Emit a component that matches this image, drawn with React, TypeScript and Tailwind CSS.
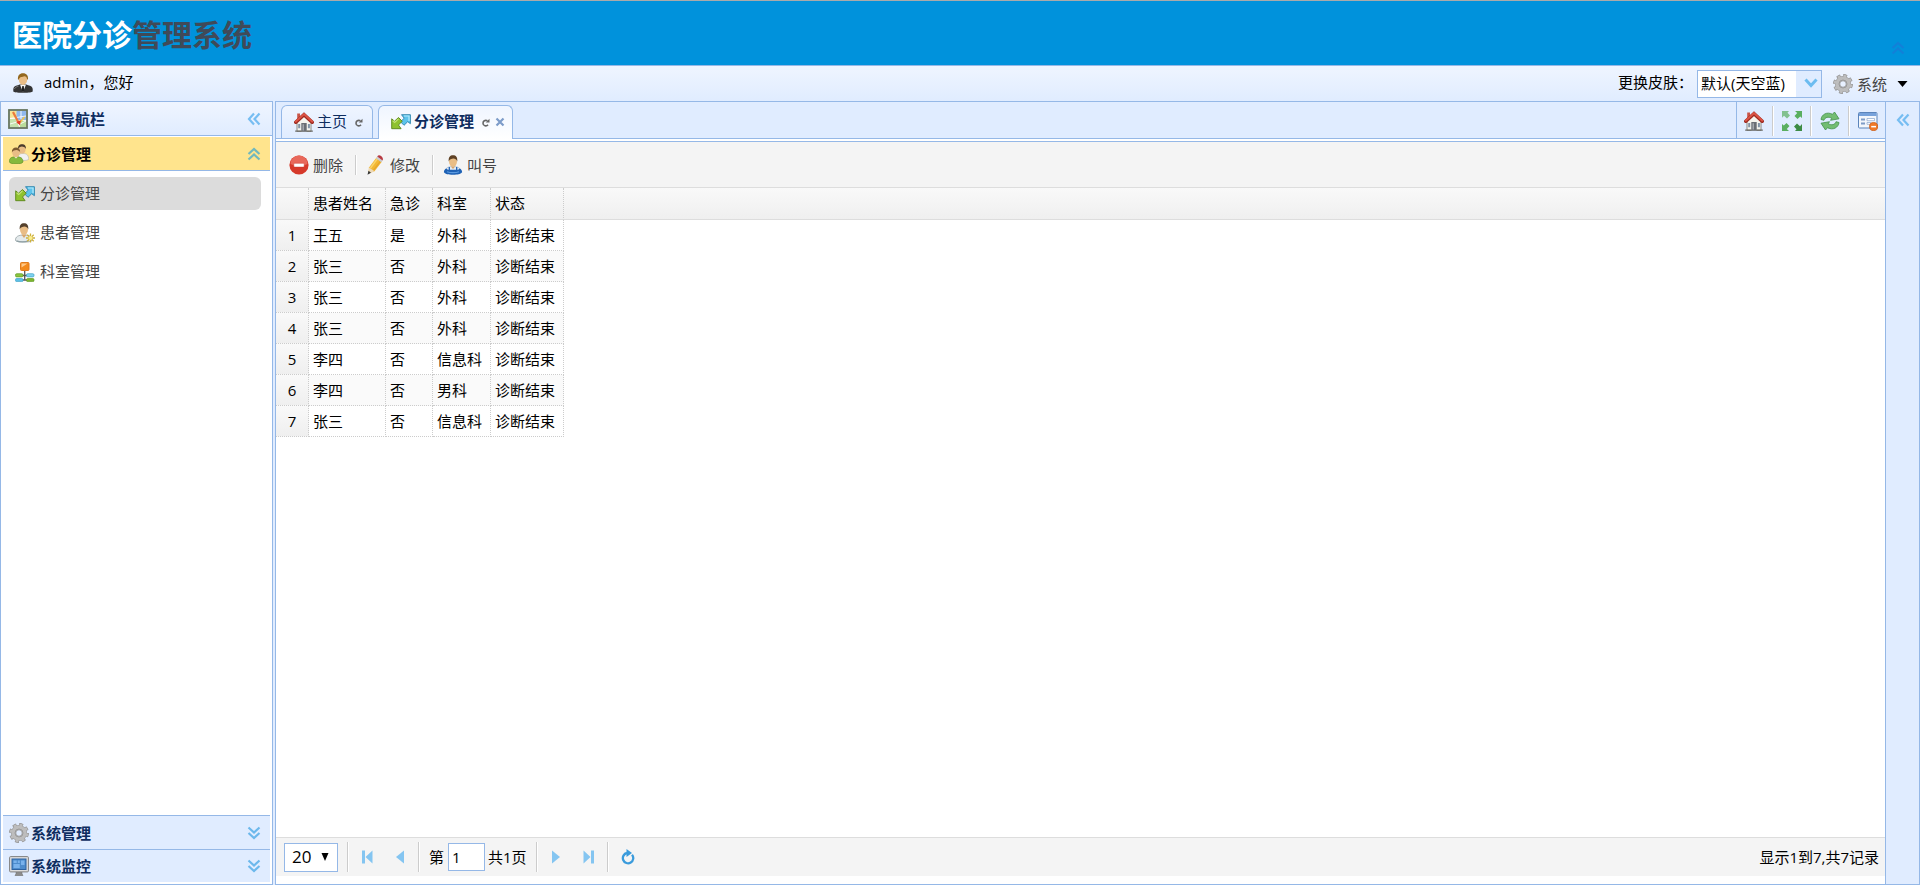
import React from 'react';

type IconProps = { className?: string };

const UserSuitIcon = ({ className = 'w-5 h-5' }: IconProps) => (
    <svg viewBox="0 0 20 20" className={className} aria-hidden="true">
        <path d="M0.300 18.500V16c0-2.200 1.800-3 4.500-3.800L8 11h4l3.200 1.200c2.700.8 4.500 1.600 4.500 3.800v2.500c-1 .9-3 1.200-9.700 1.200S1.300 19.400.3 18.500z" fill="#343434" />
        <path d="M1.500 16c.2-1.500 2-2.200 4-2.800" stroke="#777" fill="none" />
        <path d="M7 11.500h6l-1.500 4L10 19l-1.500-3.500z" fill="#f4f4f4" />
        <path d="M9.300 13h1.400l.7 4.500L10 19l-1.400-1.500z" fill="#222" />
        <ellipse cx="10" cy="6.500" rx="4.200" ry="5.400" fill="#e9bd86" />
        <path d="M5 7C4.500 2.500 6.500.3 10 .3S15.500 2.500 15 7l-1-1.200c-.3-1.600-1-2.300-2.500-2.600C9 4.200 7 3.600 6 6z" fill="#93671f" />
    </svg>
);

const MapIcon = () => (
    <svg viewBox="0 0 20 20" className="w-5 h-5" aria-hidden="true">
        <rect x="1" y="1" width="18" height="18" fill="#f5f3e6" stroke="#66755f" strokeWidth="1.800" />
        <rect x="2" y="2" width="7" height="7" fill="#f6e596" />
        <rect x="8.500" y="2" width="9.500" height="9" fill="#8fb8ee" />
        <path d="M2 10h6l3 8H2z" fill="#c5e3ae" />
        <path d="M12 12h6v6h-6z" fill="#b9dc9a" />
        <path d="M2 9.500l16-2.500M13 2v8M2 15l7-2M10 16l8-4" stroke="#fff" strokeWidth="0.900" fill="none" />
        <path d="M5 3l6 11.500" stroke="#ec7a3c" strokeWidth="2.200" fill="none" />
        <path d="M11 14.500l5.500-6.500" stroke="#f3c34d" strokeWidth="1.600" fill="none" />
        <path d="M8.200 13l3.800 3.300.8-5z" fill="#df3a28" />
    </svg>
);

const GroupIcon = () => (
    <svg viewBox="0 0 20 20" className="w-5 h-5" aria-hidden="true">
        <path d="M9 12c1-2 2.500-2.500 5-2.500 4 0 5.700 2 5.700 6-3 1.500-7 1-9 .5z" fill="#f1f1f1" stroke="#aaa" strokeWidth="0.500" />
        <ellipse cx="13" cy="5" rx="3.600" ry="4.500" fill="#e9bd86" />
        <path d="M9 5C9 1.500 10.500.2 13 .2S17 1.500 17 5c-1-2-3-2-4-2.400C11 3 10 3.500 9 5z" fill="#4b3b2b" />
        <path d="M.4 18c-.3-4 2-5.200 6.600-5.200s7 1.200 7 5.200c-1 1.500-3 1.700-7 1.700S1.200 19.500.4 18z" fill="#86b93d" stroke="#5d8c23" strokeWidth="0.600" />
        <path d="M5 12.500h4l-2 2z" fill="#f5e6cf" />
        <ellipse cx="7" cy="8.500" rx="3.800" ry="4.500" fill="#e9bd86" />
        <path d="M2.800 8.500C2.800 5 4.500 3.500 7 3.500s4.200 1.500 4.200 5C10.500 6.500 9 6.500 7.500 6 5.500 6.200 4 6.500 2.800 8.500z" fill="#7c5a30" />
    </svg>
);

const TransferIcon = () => (
    <svg viewBox="0 0 20 20" className="w-5 h-5" aria-hidden="true">
        <path d="M10.500 2.700h8.900v9l-2.700-2-3.700 3.600-3.500-3.500 3.700-3.600z" fill="#5cc3ec" stroke="#2b83ad" strokeWidth="0.900" strokeLinejoin="round" />
        <path d="M13 4h5v5" stroke="#b3e9fb" strokeWidth="1.200" fill="none" />
        <path d="M.7 6.800l2.800 2.400L7.500 5.500l3.700 3.700-3.700 3.800 2.600 3.700H.7z" fill="#8fc22f" stroke="#5a861a" strokeWidth="0.900" strokeLinejoin="round" />
        <path d="M1.700 8.800l2 1.700 3.800-3.600" stroke="#c3e377" strokeWidth="1.200" fill="none" />
    </svg>
);

const UserStarIcon = () => (
    <svg viewBox="0 0 20 20" className="w-5 h-5" aria-hidden="true">
        <path d="M.5 17.500c-.3-4 3-5.500 8.500-5.500s8 1.500 8 5.500c-2 1.500-4 1.500-8 1.500S2 19 .5 17.500z" fill="#e4eaec" stroke="#8d999c" strokeWidth="0.700" />
        <path d="M1.500 17.800c3 1.300 9 1.300 12 0" stroke="#8fa0a5" strokeWidth="1.300" fill="none" />
        <path d="M6.500 11.500h5L9 15z" fill="#d9a56a" />
        <ellipse cx="9" cy="6.500" rx="4" ry="5.200" fill="#e9bd86" />
        <path d="M4.700 6.500C4.400 2 6 .3 9 .3s4.600 1.700 4.300 6.200C12.500 4 11 4 9.500 3.500 7.500 4 5.500 4 4.700 6.500z" fill="#54402c" />
        <path d="M15.500 10.500v9M11 15h9M12.300 11.800l6.400 6.400M18.700 11.800l-6.400 6.400" stroke="#cfb13d" strokeWidth="1.300" />
        <circle cx="15.500" cy="15" r="2" fill="#fbef8e" />
    </svg>
);

const OrgIcon = () => (
    <svg viewBox="0 0 20 20" className="w-5 h-5" aria-hidden="true">
        <path d="M9.700 8v10.500M6 13.500h8M6 18h8" stroke="#555" strokeWidth="1.300" />
        <rect x="5.500" y="0.500" width="8.500" height="8" rx="1" fill="#f38a1c" stroke="#e07b1c" />
        <path d="M6.500 1.500h6l-6 4z" fill="#ffc98a" />
        <rect x="0.500" y="11.700" width="7.500" height="3.200" rx="1.200" fill="#8cc63f" stroke="#5f9a25" strokeWidth="0.700" />
        <rect x="11.500" y="11.700" width="7.500" height="3.200" rx="1.200" fill="#7fd2ee" stroke="#3fa3c8" strokeWidth="0.700" />
        <rect x="0.500" y="16.500" width="7.500" height="3.100" rx="1.200" fill="#5cbfe6" stroke="#3fa3c8" strokeWidth="0.700" />
        <rect x="11.500" y="16.500" width="7.500" height="3.100" rx="1.200" fill="#7db52f" stroke="#5f9a25" strokeWidth="0.700" />
    </svg>
);

const GearIcon = () => (
    <svg viewBox="0 0 20 20" className="w-5 h-5" aria-hidden="true">
        <circle cx="10" cy="10" r="8.300" fill="none" stroke="#909090" strokeWidth="3.200" strokeDasharray="3.700 2.818" />
        <circle cx="10" cy="10" r="5.400" fill="none" stroke="#9b9b9b" strokeWidth="5.400" />
        <circle cx="10" cy="10" r="8" fill="none" stroke="#bdbdbd" strokeWidth="2.600" strokeDasharray="2.700 3.583" strokeDashoffset="-0.500" />
        <circle cx="10" cy="10" r="5.400" fill="none" stroke="#bdbdbd" strokeWidth="4.400" />
        <circle cx="10" cy="10" r="4" fill="none" stroke="#969696" strokeWidth="0.900" />
    </svg>
);

const MonitorIcon = () => (
    <svg viewBox="0 0 20 20" className="w-5 h-5" aria-hidden="true">
        <path d="M7 15h6v2.500l1 2.200H6l1-2.200z" fill="#8c8c8c" stroke="#6c6c6c" strokeWidth="0.500" />
        <rect x="0.600" y="0.600" width="18.800" height="15.300" rx="1" fill="#dedede" stroke="#7f7f7f" />
        <rect x="3" y="3" width="14" height="10.500" fill="#4d8ccc" stroke="#2d62a2" />
        <path d="M4.500 4.500h3.200V7H4.500zM8.800 4.500h2v2.500h-2zM12 4.500h3.500V9H12zM4.500 8h6.300v4H4.500z" fill="#79b2ec" />
    </svg>
);

const HomeIcon = () => (
    <svg viewBox="0 0 20 20" className="w-5 h-5" aria-hidden="true">
        <path d="M3 10l7-7 7 7v9.300H3z" fill="#f6f4ee" stroke="#7f7f79" strokeWidth="0.900" />
        <path d="M3.200 1.500h2.800v4.500L3.200 8.500z" fill="#c95548" />
        <path d="M1.800 10.200L10 2.600l8.200 7.600" fill="none" stroke="#9f2a20" strokeWidth="3.600" strokeLinecap="round" />
        <path d="M1.900 9.600L10 2.100l8.100 7.500" fill="none" stroke="#dc5446" strokeWidth="2" strokeLinecap="round" />
        <rect x="7.300" y="11" width="5.400" height="8.500" fill="#6b6e74" />
        <path d="M8.500 12.300h1.500v6.200H8.500z" fill="#a5a8ad" />
        <path d="M4.200 12h2v4.300h-2zM13.900 12h2v4.300h-2z" fill="#8293a6" />
        <path d="M1.200 18.400h6.300v1.400H1.200zM12.500 18.400h6.300v1.400h-6.300z" fill="#6a6a64" />
    </svg>
);

const ArrowsOutIcon = () => (
    <svg viewBox="0 0 20 20" className="w-5 h-5 text-[#5aaf60]" fill="currentColor" aria-hidden="true">
        <path d="M0 0h7L5.500 1.800 8 4.500 5 7.500 2 4.800 0 6.800z" opacity="0.700" />
        <path d="M20 0v7l-1.800-1.500L15.500 8l-3-3 2.700-3L13 0z" />
        <path d="M0 20v-7l1.800 1.500L4.500 12l3 3-2.700 3L7 20z" />
        <path d="M20 20h-7l1.500-1.800L12 15.500l3-3 3 2.700 2-2.200z" fill="#3d8c45" />
    </svg>
);

const SyncIcon = () => (
    <svg viewBox="0 0 20 20" className="w-5 h-5" fill="#73bd72" stroke="#43904a" strokeWidth="0.800" strokeLinejoin="round" aria-hidden="true">
        <path d="M1 8.500C1.500 3.500 7 .3 12.500 3.300L14.500 1l4.500 6.800-8.500 1.500 1.300-2C8.500 5.500 5 6 4 9.300z" />
        <path d="M19 11.500c-.5 5-6 8.200-11.500 5.200L5.500 19 1 12.200l8.500-1.500-1.300 2c3.300 1.800 6.800 1.300 7.800-2z" />
    </svg>
);

const FormDeleteIcon = () => (
    <svg viewBox="0 0 20 20" className="w-5 h-5" aria-hidden="true">
        <rect x="0.500" y="1.500" width="18.500" height="15.500" rx="1" fill="#f3f7fc" stroke="#5b84bb" />
        <path d="M1 2h17.500v3H1z" fill="#77a2db" />
        <path d="M3 7.500h4v2H3zM3 11.500h4v2H3z" fill="#7f9cc6" />
        <path d="M9 7.500h7.500v2.200H9zM9 11.500h4v1.800H9z" fill="#fff" stroke="#8aa5cb" strokeWidth="0.700" />
        <circle cx="15.600" cy="15.600" r="4.100" fill="#f07a28" stroke="#c6550e" strokeWidth="0.700" />
        <path d="M13.200 14.900h4.800v1.500h-4.800z" fill="#fff" />
    </svg>
);

const DeleteIcon = () => (
    <svg viewBox="0 0 20 20" className="w-5 h-5" aria-hidden="true">
        <circle cx="10" cy="10" r="9.600" fill="#d6392a" />
        <path d="M1.500 9a8.500 8.500 0 0 1 17 0c-5 2.500-12 2.500-17 0z" fill="#e8685a" />
        <rect x="4.800" y="8.300" width="10.400" height="3.800" rx="0.800" fill="#fff" stroke="#c9362a" strokeWidth="0.500" />
    </svg>
);

const PencilIcon = () => (
    <svg viewBox="0 0 20 20" className="w-5 h-5" aria-hidden="true">
        <path d="M3 12.500L10.500 2.500l5.500 4L8.500 16.200 2.500 18.500z" fill="#f2b733" />
        <path d="M4.500 13l7-9.500" stroke="#fad368" strokeWidth="1.500" />
        <path d="M7.500 15.300l7.200-9.500" stroke="#e5a52d" strokeWidth="1.300" />
        <path d="M3 12.500l5.500 3.800-6.300 2.700z" fill="#ecd9b8" />
        <path d="M2.500 15.800l2.500 2-3.500 1.900z" fill="#333" />
        <path d="M10 3.200l1.200-1.600 5.300 4-1.200 1.700z" fill="#c9ccd2" />
        <path d="M11.200 1.600c1-1.400 2.200-1.700 3.900-.5s2.300 3 1.400 4.500z" fill="#b73a42" />
    </svg>
);

const CallUserIcon = () => (
    <svg viewBox="0 0 20 20" className="w-5 h-5" aria-hidden="true">
        <path d="M2.500 14.500c1-2.200 4-3 7.500-3s6.500.8 7.500 3l-1 3h-13z" fill="#e4edf7" stroke="#93aac6" strokeWidth="0.600" />
        <path d="M.9 17.300c-.1-1.800.9-3.300 2.600-3.800.8 1.300 1.800 1.500 2.800 1.200h7.400c1 .3 2 .1 2.800-1.200 1.700.5 2.700 2 2.600 3.800-2 2-4 2.400-9.100 2.400s-7.100-.4-9.100-2.400z" fill="#1f62b5" />
        <path d="M6.300 12v3M13.700 12v3" stroke="#1f62b5" strokeWidth="1.300" />
        <path d="M4 16.800c3 1.200 9 1.200 12 0" stroke="#5c9be0" strokeWidth="1.200" fill="none" />
        <path d="M7.700 11.500h4.600L10 14z" fill="#d9a56a" />
        <ellipse cx="10" cy="6.500" rx="4" ry="5.200" fill="#e9bd86" />
        <path d="M5.700 6.500C5.400 2 7 .3 10 .3s4.600 1.700 4.300 6.200C13.500 4 12 4 10.500 3.500 8.500 4 6.500 4 5.700 6.500z" fill="#5e4023" />
    </svg>
);

const ChevronsIcon = ({ className = '' }: IconProps) => (
    <svg viewBox="0 0 14 14" className={`w-3.5 h-3.5 ${className}`} fill="none" stroke="currentColor" strokeWidth="2.200" aria-hidden="true">
        <path d="M7 1.500L2 7l5 5.500M12.500 1.500l-5 5.500 5 5.500" />
    </svg>
);

const TabReloadIcon = () => (
    <svg viewBox="0 0 8 9" className="w-2 h-[9px]" aria-hidden="true">
        <path d="M5.500 2.700C3 1.800 1 3 1 5.200 1 8 4.500 8.700 6 6.700" fill="none" stroke="currentColor" strokeWidth="1.600" />
        <path d="M3.800 4.400h3.700V0.700z" fill="currentColor" />
    </svg>
);

const ReloadIcon = () => (
    <svg viewBox="0 0 14 16" className="w-3.5 h-4" aria-hidden="true">
        <path d="M11 5.700A5.200 5.200 0 1 1 6 4" fill="none" stroke="currentColor" strokeWidth="2.300" />
        <path d="M5.500 0l5.500 4-5.500 4z" fill="currentColor" />
    </svg>
);

const PagerArrow = ({ bar = false, flip = false }: { bar?: boolean; flip?: boolean }) => (
    <svg viewBox="0 0 12 14" className={`w-3 h-3.5 text-[#84c5f1] ${flip ? '-scale-x-100' : ''}`} fill="currentColor" aria-hidden="true">
        <path d={bar ? 'M1 .5h3v13H1zM11.500 .5v13L4.500 7z' : 'M10 .5v13L2 7z'} />
    </svg>
);

const Separator = ({ className = 'h-5' }: IconProps) => (
    <span className={`w-0.5 shrink-0 border-l border-l-[#ccc] border-r border-r-white ${className}`} />
);

const rows = [
    { name: '王五', urgent: '是', dept: '外科', status: '诊断结束' },
    { name: '张三', urgent: '否', dept: '外科', status: '诊断结束' },
    { name: '张三', urgent: '否', dept: '外科', status: '诊断结束' },
    { name: '张三', urgent: '否', dept: '外科', status: '诊断结束' },
    { name: '李四', urgent: '否', dept: '信息科', status: '诊断结束' },
    { name: '李四', urgent: '否', dept: '男科', status: '诊断结束' },
    { name: '张三', urgent: '否', dept: '信息科', status: '诊断结束' },
];

const menu = [
    { label: '分诊管理', icon: <TransferIcon />, active: true },
    { label: '患者管理', icon: <UserStarIcon />, active: false },
    { label: '科室管理', icon: <OrgIcon />, active: false },
];

const tabTools = [
    { label: '主页', icon: <HomeIcon /> },
    { label: '全屏', icon: <ArrowsOutIcon /> },
    { label: '刷新', icon: <SyncIcon /> },
    { label: '关闭', icon: <FormDeleteIcon /> },
];

const actions = [
    { label: '删除', icon: <DeleteIcon /> },
    { label: '修改', icon: <PencilIcon /> },
    { label: '叫号', icon: <CallUserIcon /> },
];

const Header = () => (
    <header className="shrink-0">
        <div className="h-[66px] flex items-center justify-between pl-3 pr-[15px] bg-[#0092dc] border-t border-t-[#aaa] border-b border-b-[#95b8e7]">
            <h1 className="text-[30px] leading-10 font-bold text-white pt-1">
                医院分诊<span className="text-[#404a58]">管理系统</span>
            </h1>
            <button type="button" aria-label="收起" className="self-end mb-2.5 text-[#1280d8]">
                <ChevronsIcon className="rotate-90" />
            </button>
        </div>
        <div className="h-[35px] flex items-center justify-between px-3 bg-linear-to-b from-[#eff5ff] to-[#e0ecff]">
            <div className="flex items-center gap-2.5 pb-0.5">
                <UserSuitIcon className="w-[22px] h-5" />
                <span className="pb-0.5">admin，您好</span>
            </div>
            <div className="flex items-center">
                <label htmlFor="skin" className="pb-1 mr-1">更换皮肤：</label>
                <div className="relative w-[125px] h-7">
                    <select id="skin" className="appearance-none w-full h-full pl-[3px] pb-0.5 bg-linear-to-r from-white from-80% to-[#e0ecff] to-80% border border-[#95b8e7] outline-none">
                        <option>默认(天空蓝)</option>
                    </select>
                    <svg viewBox="0 0 14 10" className="absolute right-1 top-2 w-3.5 h-2.5 pointer-events-none" fill="none" stroke="#6cbcf0" strokeWidth="3" aria-hidden="true">
                        <path d="M1.500 1.500L7 7.500l5.500-6" />
                    </svg>
                </div>
                <button type="button" className="flex items-center ml-[11px] text-[#444]">
                    <GearIcon />
                    <span className="ml-1">系统</span>
                    <svg viewBox="0 0 11 6" className="w-[11px] h-1.5 ml-2.5" aria-hidden="true">
                        <path d="M0.500 0h10L5.500 6z" fill="#000" />
                    </svg>
                </button>
            </div>
        </div>
    </header>
);

const AccordionHeader = ({ icon, label, last = false }: { icon: React.ReactNode; label: string; last?: boolean }) => (
    <button type="button" className={`flex items-center w-full pl-1.5 pr-[9px] bg-[#e0ecff] border-t border-[#95b8e7] font-bold text-[#0e2d5f] ${last ? 'h-[33px]' : 'h-[34px]'}`}>
        {icon}
        <span className="ml-0.5">{label}</span>
        <ChevronsIcon className="ml-auto -rotate-90 text-[#6cb8ec]" />
    </button>
);

const Sidebar = () => (
    <aside className="w-[273px] shrink-0 flex flex-col bg-white border border-[#95b8e7]">
        <div className="h-[34px] shrink-0 flex items-center pl-[7px] pr-[11px] border-b border-[#95b8e7] bg-linear-to-b from-[#eff5ff] to-[#e0ecff]">
            <MapIcon />
            <h2 className="ml-0.5 font-bold text-[#0e2d5f]">菜单导航栏</h2>
            <button type="button" aria-label="折叠菜单" className="ml-auto text-[#76bdf2]">
                <ChevronsIcon />
            </button>
        </div>
        <div className="flex-1 flex flex-col px-0.5 pt-px pb-0.5">
            <button type="button" className="h-[34px] flex items-center pl-1.5 pr-[9px] bg-[#ffe48d] border-b border-[#95b8e7] font-bold text-black">
                <GroupIcon />
                <span className="ml-0.5">分诊管理</span>
                <ChevronsIcon className="ml-auto rotate-90 text-[#72b8bd]" />
            </button>
            <nav className="flex-1 flex flex-col gap-1.5 pt-1.5 pl-1.5 pr-[9px]">
                {menu.map((item) => (
                    <a
                        key={item.label}
                        href="#"
                        className={`h-[33px] flex items-center gap-[5px] pl-1.5 rounded-md text-[#444] ${item.active ? 'bg-[#dcdcdc]' : ''}`}
                    >
                        {item.icon}
                        <span className="pb-0.5">{item.label}</span>
                    </a>
                ))}
            </nav>
            <AccordionHeader icon={<GearIcon />} label="系统管理" />
            <AccordionHeader icon={<MonitorIcon />} label="系统监控" last />
        </div>
    </aside>
);

const Tabs = () => (
    <div className="h-[37px] shrink-0 flex justify-between bg-[#e0ecff] border-b border-[#95b8e7]">
        <div role="tablist" className="flex gap-[5px] pl-[5px] pt-[3px] text-[#0e2d5f]">
            <div role="tab" aria-selected="false" className="h-[33px] w-[92px] flex items-center pl-3 border border-b-0 border-[#95b8e7] rounded-t-md bg-linear-to-b from-[#eff5ff] to-[#e0ecff]">
                <HomeIcon />
                <span className="ml-[3px] pb-0.5">主页</span>
                <button type="button" aria-label="刷新主页" className="ml-2 text-[#666]">
                    <TabReloadIcon />
                </button>
            </div>
            <div role="tab" aria-selected="true" className="h-[34px] w-[135px] flex items-center pl-3 pb-px border border-b-0 border-[#95b8e7] rounded-t-md bg-linear-to-b from-[#eff5ff] to-white font-bold">
                <TransferIcon />
                <span className="ml-[3px] pb-0.5">分诊管理</span>
                <button type="button" aria-label="刷新分诊管理" className="ml-2 text-[#666]">
                    <TabReloadIcon />
                </button>
                <button type="button" aria-label="关闭分诊管理" className="ml-[5px]">
                    <svg viewBox="0 0 10 10" className="w-2.5 h-2.5" stroke="#7d9cc9" strokeWidth="2.200" aria-hidden="true">
                        <path d="M1.500 1.500l7 7M8.500 1.500l-7 7" />
                    </svg>
                </button>
            </div>
        </div>
        <div className="flex items-center border-l border-[#95b8e7] px-[7px] pt-px">
            {tabTools.map((tool, i) => (
                <React.Fragment key={tool.label}>
                    {i > 0 && <Separator className="h-[30px] mx-2" />}
                    <button type="button" aria-label={tool.label}>{tool.icon}</button>
                </React.Fragment>
            ))}
        </div>
    </div>
);

const DataGrid = () => {
    const cell = 'border-r border-b border-dotted border-[#ccc] px-1 h-[31px] py-0';
    const head = 'border-r border-r-[#ccc] [border-right-style:dotted] border-b border-b-[#ddd] px-1 h-8 pt-0 pb-0.5 font-normal text-left';
    return (
        <table className="w-full table-fixed border-separate border-spacing-0 text-black">
            <colgroup>
                <col className="w-[33px]" />
                <col className="w-[77px]" />
                <col className="w-[47px]" />
                <col className="w-[58px]" />
                <col className="w-[73px]" />
                <col />
            </colgroup>
            <thead>
                <tr className="bg-linear-to-b from-[#f9f9f9] to-[#efefef]">
                    <th className={head} />
                    <th className={head}>患者姓名</th>
                    <th className={head}>急诊</th>
                    <th className={head}>科室</th>
                    <th className={head}>状态</th>
                    <th className="border-b border-[#ddd]" />
                </tr>
            </thead>
            <tbody>
                {rows.map((row, i) => (
                    <tr key={i}>
                        <td className={`${cell} text-center bg-linear-to-b from-[#f9f9f9] to-[#efefef]`}>{i + 1}</td>
                        {[row.name, row.urgent, row.dept, row.status].map((text, j) => (
                            <td key={j} className={`${cell} ${i % 2 ? 'bg-[#fafafa]' : 'bg-white'}`}>{text}</td>
                        ))}
                    </tr>
                ))}
            </tbody>
        </table>
    );
};

const Pager = () => (
    <div className="h-[39px] shrink-0 flex items-center pl-2 pr-1.5 mb-2 bg-[#f4f4f4] border-t border-[#ddd] text-black">
        <div className="relative w-[54px] h-[29px]">
            <select aria-label="每页条数" className="appearance-none w-full h-full pl-[7px] bg-white border border-[#95b8e7] text-[17px] outline-none">
                <option>20</option>
            </select>
            <svg viewBox="0 0 8 8" className="absolute right-[9px] top-2.5 w-2 h-2 pointer-events-none" aria-hidden="true">
                <path d="M0.500 0h7L4 8z" />
            </svg>
        </div>
        <Separator className="h-[30px] ml-[9px]" />
        <button type="button" aria-label="首页" className="ml-3"><PagerArrow bar /></button>
        <button type="button" aria-label="上一页" className="ml-[21px]"><PagerArrow /></button>
        <Separator className="h-[30px] ml-3" />
        <label htmlFor="page" className="ml-[9px]">第</label>
        <input id="page" defaultValue="1" className="w-[37px] h-7 ml-1 px-[3px] bg-white border border-[#95b8e7] outline-none" />
        <span className="ml-[3px]">共1页</span>
        <Separator className="h-[30px] ml-[9px]" />
        <button type="button" aria-label="下一页" className="ml-3"><PagerArrow flip /></button>
        <button type="button" aria-label="末页" className="ml-[21px]"><PagerArrow bar flip /></button>
        <Separator className="h-[30px] ml-3" />
        <button type="button" aria-label="刷新" className="ml-3 text-[#3a9bdc]">
            <ReloadIcon />
        </button>
        <span className="ml-auto">显示1到7,共7记录</span>
    </div>
);

const App: React.FC = () => {
    return (
        <div className="h-screen flex flex-col overflow-hidden bg-[#e0ecff] font-['Open_Sans','Noto_Sans_CJK_SC',sans-serif] text-[15px] leading-5 text-black">
            <Header />
            <div className="flex-1 min-h-0 flex">
                <Sidebar />
                <main className="flex-1 min-w-0 ml-0.5 flex flex-col bg-white border border-r-0 border-[#95b8e7]">
                    <Tabs />
                    <section className="flex-1 min-h-0 mt-0.5 flex flex-col border-t border-[#95b8e7]">
                        <div className="h-[46px] shrink-0 flex items-center pl-[13px] bg-[#f4f4f4] border-b border-[#ddd] text-[#444]">
                            {actions.map((action, i) => (
                                <React.Fragment key={action.label}>
                                    {i > 0 && <Separator className="h-5 ml-3 mr-[9px]" />}
                                    <button type="button" className="flex items-center gap-1">
                                        {action.icon}
                                        {action.label}
                                    </button>
                                </React.Fragment>
                            ))}
                        </div>
                        <div className="flex-1 min-h-0 overflow-auto">
                            <DataGrid />
                        </div>
                        <Pager />
                    </section>
                </main>
                <aside className="w-[35px] shrink-0 flex justify-center items-start pt-[11px] border border-[#95b8e7]">
                    <button type="button" aria-label="展开右侧面板" className="text-[#76bdf2]">
                        <ChevronsIcon />
                    </button>
                </aside>
            </div>
        </div>
    );
};

export default App;
